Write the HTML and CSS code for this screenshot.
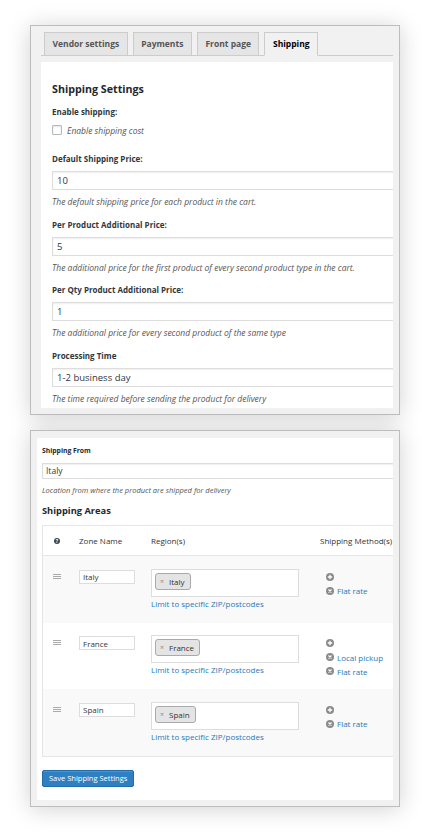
FILE: index.html
```html
<!DOCTYPE html>
<html lang="en">
<head>
<meta charset="utf-8">
<title>Shipping Settings</title>
<link rel="stylesheet" href="styles.css">
</head>
<body>
<div class="page">
  <section class="panel panel-settings">
    <nav class="tabs">
      <a class="tab" href="#">Vendor settings</a>
      <a class="tab" href="#">Payments</a>
      <a class="tab" href="#">Front page</a>
      <a class="tab tab-active" href="#">Shipping</a>
    </nav>
    <div class="sheet">
      <h2 class="title">Shipping Settings</h2>
      <div class="label label-enable">Enable shipping:</div>
      <label class="check"><input class="checkbox" type="checkbox"><span>Enable shipping cost</span></label>
      <div class="fields">
        <div class="field">
          <div class="label">Default Shipping Price:</div>
          <input class="input" type="text" value="10">
          <p class="desc">The default shipping price for each product in the cart.</p>
        </div>
        <div class="field">
          <div class="label">Per Product Additional Price:</div>
          <input class="input" type="text" value="5">
          <p class="desc">The additional price for the first product of every second product type in the cart.</p>
        </div>
        <div class="field">
          <div class="label">Per Qty Product Additional Price:</div>
          <input class="input" type="text" value="1">
          <p class="desc">The additional price for every second product of the same type</p>
        </div>
        <div class="field">
          <div class="label">Processing Time</div>
          <input class="input" type="text" value="1-2 business day">
          <p class="desc">The time required before sending the product for delivery</p>
        </div>
      </div>
    </div>
  </section>

  <section class="panel panel-areas">
    <div class="sheet sheet-areas">
      <div class="from-label">Shipping From</div>
      <input class="input input-small" type="text" value="Italy">
      <p class="desc desc-small">Location from where the product are shipped for delivery</p>
      <h3 class="areas-title">Shipping Areas</h3>
      <div class="zones">
        <div class="zones-head">
          <span class="help">?</span>
          <span>Zone Name</span>
          <span>Region(s)</span>
          <span>Shipping Method(s)</span>
        </div>

        <div class="zone zone-alt">
          <span class="handle"></span>
          <input class="zone-name" type="text" value="Italy">
          <div class="region">
            <div class="region-box"><span class="chip"><span class="chip-x">×</span>Italy</span></div>
            <a class="zip-link" href="#">Limit to specific ZIP/postcodes</a>
          </div>
          <div class="methods">
            <span class="method"><svg class="icon" viewBox="0 0 8 8"><circle cx="4" cy="4" r="4" fill="#8a8a8a"/><path d="M4 1.8v4.4M1.8 4h4.4" stroke="#fff" stroke-width="1.3"/></svg></span>
            <a class="method" href="#"><svg class="icon" viewBox="0 0 8 8"><circle cx="4" cy="4" r="4" fill="#8a8a8a"/><path d="M2.5 2.5l3 3M5.5 2.5l-3 3" stroke="#fff" stroke-width="1.2"/></svg>Flat rate</a>
          </div>
        </div>

        <div class="zone">
          <span class="handle"></span>
          <input class="zone-name" type="text" value="France">
          <div class="region">
            <div class="region-box"><span class="chip"><span class="chip-x">×</span>France</span></div>
            <a class="zip-link" href="#">Limit to specific ZIP/postcodes</a>
          </div>
          <div class="methods">
            <span class="method"><svg class="icon" viewBox="0 0 8 8"><circle cx="4" cy="4" r="4" fill="#8a8a8a"/><path d="M4 1.8v4.4M1.8 4h4.4" stroke="#fff" stroke-width="1.3"/></svg></span>
            <a class="method" href="#"><svg class="icon" viewBox="0 0 8 8"><circle cx="4" cy="4" r="4" fill="#8a8a8a"/><path d="M2.5 2.5l3 3M5.5 2.5l-3 3" stroke="#fff" stroke-width="1.2"/></svg>Local pickup</a>
            <a class="method" href="#"><svg class="icon" viewBox="0 0 8 8"><circle cx="4" cy="4" r="4" fill="#8a8a8a"/><path d="M2.5 2.5l3 3M5.5 2.5l-3 3" stroke="#fff" stroke-width="1.2"/></svg>Flat rate</a>
          </div>
        </div>

        <div class="zone zone-alt">
          <span class="handle"></span>
          <input class="zone-name" type="text" value="Spain">
          <div class="region">
            <div class="region-box"><span class="chip"><span class="chip-x">×</span>Spain</span></div>
            <a class="zip-link" href="#">Limit to specific ZIP/postcodes</a>
          </div>
          <div class="methods">
            <span class="method"><svg class="icon" viewBox="0 0 8 8"><circle cx="4" cy="4" r="4" fill="#8a8a8a"/><path d="M4 1.8v4.4M1.8 4h4.4" stroke="#fff" stroke-width="1.3"/></svg></span>
            <a class="method" href="#"><svg class="icon" viewBox="0 0 8 8"><circle cx="4" cy="4" r="4" fill="#8a8a8a"/><path d="M2.5 2.5l3 3M5.5 2.5l-3 3" stroke="#fff" stroke-width="1.2"/></svg>Flat rate</a>
          </div>
        </div>
      </div>
      <button class="save" type="button">Save Shipping Settings</button>
    </div>
  </section>
</div>
</body>
</html>
```

FILE: styles.css
```css
* { box-sizing: border-box; }

body {
  margin: 0;
  background: #fff;
  font-family: "Open Sans", "DejaVu Sans", sans-serif;
  color: #32373c;
}

.page {
  padding: 25px 0 30px 30px;
}

.panel {
  width: 370px;
  border: 1px solid #bdbdbd;
  background: #f1f1f1;
  box-shadow: 0 2px 22px rgba(0, 0, 0, 0.18);
}

.panel-settings {
  padding: 6px 6px 6px 10px;
}

.tabs {
  display: flex;
  gap: 5px;
  height: 24px;
  padding-left: 3px;
  border-bottom: 1px solid #ccc;
}

.tab {
  height: 24px;
  padding: 0 7.5px;
  border: 1px solid #ccc;
  background: #e5e5e5;
  color: #555;
  font-size: 8.5px;
  font-weight: 700;
  line-height: 22px;
  text-decoration: none;
}

.tab-active {
  background: #f1f1f1;
  border-bottom-color: #f1f1f1;
  color: #000;
}

.sheet {
  margin-top: 6px;
  padding: 19px 0 2px 11px;
  background: #fff;
  overflow: hidden;
}

.title {
  margin: 0;
  font-size: 10.7px;
  font-weight: 700;
  line-height: 16px;
  color: #23282d;
}

.label {
  font-size: 8px;
  font-weight: 700;
  line-height: 14px;
  color: #32373c;
}

.label-enable {
  margin-top: 8px;
}

.check {
  display: flex;
  align-items: center;
  gap: 5px;
  height: 14px;
  margin-top: 4px;
  font-size: 8.5px;
  font-style: italic;
  color: #555;
}

.checkbox {
  appearance: none;
  width: 10px;
  height: 10px;
  margin: 0;
  border: 1px solid #b4b9be;
  border-radius: 1px;
  background: #fff;
  box-shadow: inset 0 1px 2px rgba(0, 0, 0, 0.1);
}

.fields {
  display: flex;
  flex-direction: column;
  gap: 8.5px;
  margin-top: 15px;
}

.field {
  display: flex;
  flex-direction: column;
}

.input {
  display: block;
  flex: none;
  width: 360px;
  height: 19px;
  margin: 5px 0 0;
  padding: 0 4px;
  border: 1px solid #ddd;
  background: #fff;
  box-shadow: inset 0 1px 2px rgba(0, 0, 0, 0.07);
  font-family: "Open Sans", "DejaVu Sans", sans-serif;
  font-size: 9.5px;
  color: #32373c;
  outline: none;
}

.desc {
  margin: 5px 0 0;
  font-size: 8.5px;
  font-style: italic;
  line-height: 14px;
  color: #555;
}

/* second panel */
.panel-areas {
  margin-top: 15.5px;
  padding: 7px 6px 6px 6px;
}

.sheet-areas {
  margin-top: 0;
  padding: 7px 0 13.5px 5px;
}

.from-label {
  font-size: 6.8px;
  font-weight: 700;
  line-height: 12px;
  color: #23282d;
}

.input-small {
  height: 16px;
  margin-top: 5.5px;
  padding: 0 3px;
  font-size: 8.5px;
}

.desc-small {
  margin-top: 5.5px;
  font-size: 7.5px;
  line-height: 12px;
}

.areas-title {
  margin: 6.5px 0 0;
  font-size: 9.3px;
  font-weight: 700;
  line-height: 16px;
  color: #23282d;
}

.zones {
  width: 365px;
  margin-top: 6.5px;
  border: 1px solid #e5e5e5;
  background: #fff;
}

.zones-head,
.zone {
  display: grid;
  grid-template-columns: 36px 72px 169px 1fr;
}

.zones-head {
  height: 30px;
  align-items: center;
  border-bottom: 1px solid #e5e5e5;
  font-size: 8px;
  color: #333;
  white-space: nowrap;
}

.help {
  width: 6px;
  height: 6px;
  margin-left: 11px;
  border-radius: 50%;
  background: #444;
  color: #fff;
  font-size: 5px;
  font-weight: 700;
  line-height: 6px;
  text-align: center;
}

.zone {
  height: 66.5px;
  padding-top: 12.5px;
  align-items: start;
}

.zone-alt {
  background: #f9f9f9;
}

.handle {
  width: 8px;
  height: 5px;
  margin: 5.3px 0 0 10px;
  background: repeating-linear-gradient(#aaa 0 1px, transparent 1px 2px);
}

.zone-name {
  width: 56px;
  height: 14px;
  margin: 1px 0 0;
  padding: 0 3px;
  border: 1px solid #ddd;
  background: #fff;
  font-family: "Open Sans", "DejaVu Sans", sans-serif;
  font-size: 8px;
  color: #32373c;
  outline: none;
}

.region-box {
  display: flex;
  align-items: flex-start;
  width: 148px;
  height: 28px;
  padding: 3px;
  border: 1px solid #ddd;
  background: #fff;
}

.chip {
  display: flex;
  align-items: center;
  gap: 5px;
  height: 17px;
  padding: 0 5px 0 4px;
  border: 1px solid #aaa;
  border-radius: 3px;
  background: #e4e4e4;
  font-size: 8px;
  color: #333;
}

.chip-x {
  font-size: 7px;
  color: #888;
}

.zip-link {
  display: block;
  margin-top: 1px;
  font-size: 8px;
  line-height: 12px;
  color: #2a78b8;
  text-decoration: none;
  white-space: nowrap;
}

.methods {
  display: flex;
  flex-direction: column;
  margin-top: 1px;
  padding-left: 6px;
}

.method {
  display: flex;
  align-items: center;
  gap: 3px;
  height: 14px;
  font-size: 8px;
  color: #2a78b8;
  text-decoration: none;
  white-space: nowrap;
}

.icon {
  width: 8px;
  height: 8px;
  flex: none;
}

.save {
  display: block;
  height: 16.5px;
  margin-top: 13.5px;
  padding: 0 6px;
  border: 1px solid #1f6ca9;
  border-radius: 2px;
  background: #2e80c2;
  box-shadow: inset 0 1px 0 rgba(255, 255, 255, 0.15);
  font-family: "Open Sans", "DejaVu Sans", sans-serif;
  font-size: 7.5px;
  color: #fff;
}
```
